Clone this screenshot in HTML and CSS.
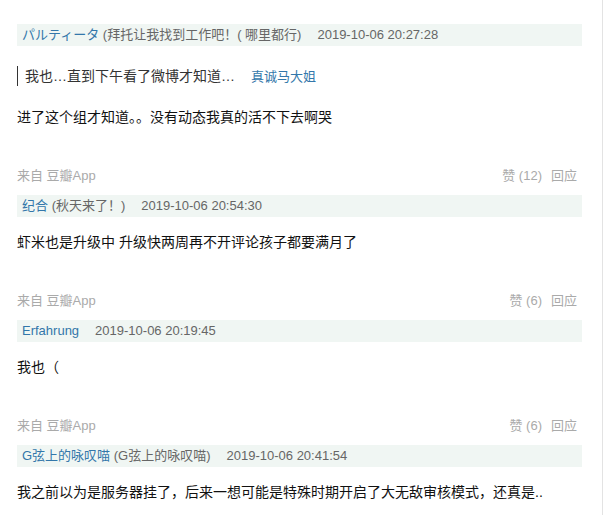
FILE: index.html
```html
<!DOCTYPE html>
<html lang="zh-CN">
<head>
    <meta charset="UTF-8">
    <meta name="viewport" content="width=device-width, initial-scale=1.0">
    <title>回应</title>
    <link rel="stylesheet" href="styles.css">
</head>
<body>

    <div class="container">
    <ul class="comments">
        <li class="comment">
            <h4 class="head"><span class="user">パルティータ</span><span class="sign"> (拜托让我找到工作吧！( 哪里都行)</span><span class="time">2019-10-06 20:27:28</span></h4>
            <div class="quote"><span class="short">我也…直到下午看了微博才知道…</span><a class="pubdate" href="#">真诚马大姐</a></div>
            <p class="content">进了这个组才知道。。没有动态我真的活不下去啊哭</p>
            <div class="meta"><span class="from">来自 豆瓣App</span><span class="ops">赞 (12)<a href="#" class="reply">回应</a></span></div>
        </li>
        <li class="comment">
            <h4 class="head"><span class="user">纪合</span><span class="sign"> (秋天来了！)</span><span class="time">2019-10-06 20:54:30</span></h4>
            <p class="content">虾米也是升级中 升级快两周再不开评论孩子都要满月了</p>
            <div class="meta"><span class="from">来自 豆瓣App</span><span class="ops">赞 (6)<a href="#" class="reply">回应</a></span></div>
        </li>
        <li class="comment">
            <h4 class="head"><span class="user">Erfahrung</span><span class="time">2019-10-06 20:19:45</span></h4>
            <p class="content">我也（</p>
            <div class="meta"><span class="from">来自 豆瓣App</span><span class="ops">赞 (6)<a href="#" class="reply">回应</a></span></div>
        </li>
        <li class="comment">
            <h4 class="head"><span class="user">G弦上的咏叹喵</span><span class="sign"> (G弦上的咏叹喵)</span><span class="time">2019-10-06 20:41:54</span></h4>
            <p class="content">我之前以为是服务器挂了，后来一想可能是特殊时期开启了大无敌审核模式，还真是..</p>
        </li>
    </ul>
    </div>

</body>
</html>
```

FILE: styles.css
```css
*{
    margin: 0;
    padding: 0;
    box-sizing: border-box;
}
body{
    font-family: "Liberation Sans", "Noto Sans CJK SC", sans-serif;
    color: #111;
    background: #fff;
}
a{
    text-decoration: none;
}
.container{
    width: 603px;
    min-height: 515px;
    border-right: 1px solid #e3e3e3;
    padding: 24px 20px 0 17px;
}
.comments{
    list-style: none;
}
.head{
    height: 22px;
    line-height: 22px;
    padding-left: 5px;
    background: #f0f6f3;
    font-size: 13px;
    font-weight: normal;
    color: #666;
    white-space: nowrap;
}
.user{
    color: #37a;
}
.time{
    margin-left: 16px;
}
.quote{
    margin: 20px 0 19px;
    border-left: 1px solid #333;
    padding-left: 7px;
    height: 20px;
    line-height: 20px;
    font-size: 14px;
    color: #333;
}
.pubdate{
    margin-left: 16px;
    font-size: 13px;
    color: #37a;
}
.content{
    margin-top: 13px;
    font-size: 14px;
    line-height: 24px;
}
.meta{
    display: flex;
    justify-content: space-between;
    margin: 37px 0 9px;
    padding-right: 5px;
    line-height: 20px;
    font-size: 13px;
    color: #aaa;
}
.reply{
    margin-left: 9px;
    color: #aaa;
}
```
